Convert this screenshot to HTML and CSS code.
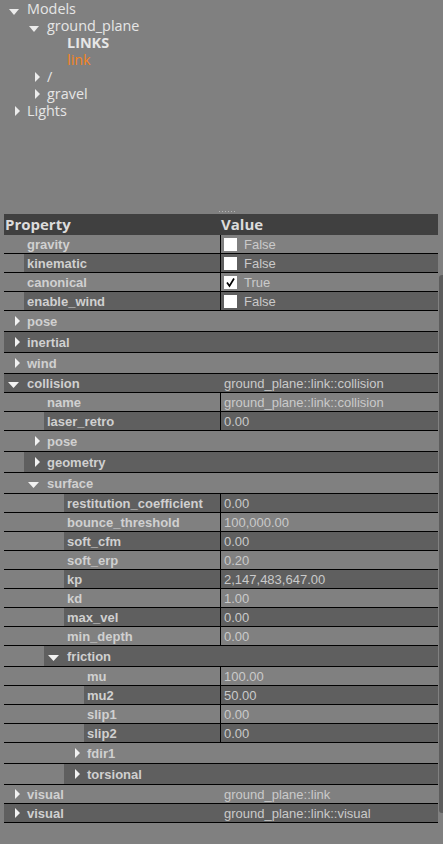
FILE: index.html
```html
<!DOCTYPE html>
<html>
<head>
<meta charset="utf-8">
<link rel="stylesheet" href="styles.css">
</head>
<body>
<div class="tree">
  <div class="trow"><span class="br dn"><svg width="10" height="6" viewBox="0 0 10 6"><path d="M0 0H10L5 6Z"/></svg></span><span class="txt">Models</span></div>
  <div class="trow"><span class="w1"></span><span class="br dn"><svg width="10" height="6" viewBox="0 0 10 6"><path d="M0 0H10L5 6Z"/></svg></span><span class="txt">ground_plane</span></div>
  <div class="trow"><span class="w2"></span><span class="br"></span><span class="txt bold">LINKS</span></div>
  <div class="trow"><span class="w2"></span><span class="br"></span><span class="txt orange">link</span></div>
  <div class="trow"><span class="w1"></span><span class="br r"><svg width="5" height="10" viewBox="0 0 5 10"><path d="M0 0L5 5L0 10Z"/></svg></span><span class="txt">/</span></div>
  <div class="trow"><span class="w1"></span><span class="br r"><svg width="5" height="10" viewBox="0 0 5 10"><path d="M0 0L5 5L0 10Z"/></svg></span><span class="txt">gravel</span></div>
  <div class="trow"><span class="br r"><svg width="5" height="10" viewBox="0 0 5 10"><path d="M0 0L5 5L0 10Z"/></svg></span><span class="txt">Lights</span></div>
</div>
<div class="splitter"><div class="dots"></div></div>
<div class="table">
  <div class="thead"><span>Property</span><span>Value</span></div>

  <div class="row l"><div class="name"><span class="w1"></span><div class="lab">gravity</div></div><div class="val"><span class="cb"></span>False</div></div>
  <div class="row d"><div class="name"><span class="w1"></span><div class="lab">kinematic</div></div><div class="val"><span class="cb"></span>False</div></div>
  <div class="row l"><div class="name"><span class="w1"></span><div class="lab">canonical</div></div><div class="val"><span class="cb"><svg width="11" height="11" viewBox="0 0 11 11"><path d="M2 5.5L4.5 9L9 1.5" fill="none" stroke="#000" stroke-width="1.7"/></svg></span>True</div></div>
  <div class="row d"><div class="name"><span class="w1"></span><div class="lab">enable_wind</div></div><div class="val"><span class="cb"></span>False</div></div>

  <div class="row l grp"><div class="name"><div class="lab"><span class="br r"><svg width="5" height="10" viewBox="0 0 5 10"><path d="M0 0L5 5L0 10Z"/></svg></span><span class="gt">pose</span></div></div></div>
  <div class="row d grp"><div class="name"><div class="lab"><span class="br r"><svg width="5" height="10" viewBox="0 0 5 10"><path d="M0 0L5 5L0 10Z"/></svg></span><span class="gt">inertial</span></div></div></div>
  <div class="row l grp"><div class="name"><div class="lab"><span class="br r"><svg width="5" height="10" viewBox="0 0 5 10"><path d="M0 0L5 5L0 10Z"/></svg></span><span class="gt">wind</span></div></div></div>
  <div class="row d gv"><div class="name"><div class="lab"><span class="br dn"><svg width="11" height="6" viewBox="0 0 11 6"><path d="M0 0H11L5.5 6Z"/></svg></span><span class="gt">collision</span></div></div><div class="val nb">ground_plane::link::collision</div></div>

  <div class="row l"><div class="name"><span class="w2"></span><div class="lab">name</div></div><div class="val">ground_plane::link::collision</div></div>
  <div class="row d"><div class="name"><span class="w2"></span><div class="lab">laser_retro</div></div><div class="val">0.00</div></div>
  <div class="row l grp"><div class="name"><span class="w1"></span><div class="lab"><span class="br r"><svg width="5" height="10" viewBox="0 0 5 10"><path d="M0 0L5 5L0 10Z"/></svg></span><span class="gt">pose</span></div></div></div>
  <div class="row d grp"><div class="name"><span class="w1"></span><div class="lab"><span class="br r"><svg width="5" height="10" viewBox="0 0 5 10"><path d="M0 0L5 5L0 10Z"/></svg></span><span class="gt">geometry</span></div></div></div>
  <div class="row l grp"><div class="name"><span class="w1"></span><div class="lab"><span class="br dn"><svg width="11" height="6" viewBox="0 0 11 6"><path d="M0 0H11L5.5 6Z"/></svg></span><span class="gt">surface</span></div></div></div>

  <div class="row d"><div class="name"><span class="w3"></span><div class="lab">restitution_coefficient</div></div><div class="val">0.00</div></div>
  <div class="row l"><div class="name"><span class="w3"></span><div class="lab">bounce_threshold</div></div><div class="val">100,000.00</div></div>
  <div class="row d"><div class="name"><span class="w3"></span><div class="lab">soft_cfm</div></div><div class="val">0.00</div></div>
  <div class="row l"><div class="name"><span class="w3"></span><div class="lab">soft_erp</div></div><div class="val">0.20</div></div>
  <div class="row d"><div class="name"><span class="w3"></span><div class="lab">kp</div></div><div class="val">2,147,483,647.00</div></div>
  <div class="row l"><div class="name"><span class="w3"></span><div class="lab">kd</div></div><div class="val">1.00</div></div>
  <div class="row d"><div class="name"><span class="w3"></span><div class="lab">max_vel</div></div><div class="val">0.00</div></div>
  <div class="row l"><div class="name"><span class="w3"></span><div class="lab">min_depth</div></div><div class="val">0.00</div></div>

  <div class="row d grp"><div class="name"><span class="w2"></span><div class="lab"><span class="br dn"><svg width="11" height="6" viewBox="0 0 11 6"><path d="M0 0H11L5.5 6Z"/></svg></span><span class="gt">friction</span></div></div></div>
  <div class="row l"><div class="name"><span class="w4"></span><div class="lab">mu</div></div><div class="val">100.00</div></div>
  <div class="row d"><div class="name"><span class="w4"></span><div class="lab">mu2</div></div><div class="val">50.00</div></div>
  <div class="row l"><div class="name"><span class="w4"></span><div class="lab">slip1</div></div><div class="val">0.00</div></div>
  <div class="row d"><div class="name"><span class="w4"></span><div class="lab">slip2</div></div><div class="val">0.00</div></div>
  <div class="row l grp"><div class="name"><span class="w3"></span><div class="lab"><span class="br r"><svg width="5" height="10" viewBox="0 0 5 10"><path d="M0 0L5 5L0 10Z"/></svg></span><span class="gt">fdir1</span></div></div></div>
  <div class="row d grp"><div class="name"><span class="w3"></span><div class="lab"><span class="br r"><svg width="5" height="10" viewBox="0 0 5 10"><path d="M0 0L5 5L0 10Z"/></svg></span><span class="gt">torsional</span></div></div></div>

  <div class="row l gv"><div class="name"><div class="lab"><span class="br r"><svg width="5" height="10" viewBox="0 0 5 10"><path d="M0 0L5 5L0 10Z"/></svg></span><span class="gt">visual</span></div></div><div class="val nb">ground_plane::link</div></div>
  <div class="row d gv"><div class="name"><div class="lab"><span class="br r"><svg width="5" height="10" viewBox="0 0 5 10"><path d="M0 0L5 5L0 10Z"/></svg></span><span class="gt">visual</span></div></div><div class="val nb">ground_plane::link::visual</div></div>
</div>
<div class="sb"></div>
</body>
</html>
```
FILE: styles.css
```css
* { box-sizing: border-box; margin: 0; padding: 0; }
html, body { background: #808080; }
body {
  width: 443px;
  height: 844px;
  overflow: hidden;
  position: relative;
  font-family: "Liberation Sans", Arial, sans-serif;
}

.w1 { width: 20px; flex: none; }
.w2 { width: 40px; flex: none; }
.w3 { width: 60px; flex: none; }
.w4 { width: 80px; flex: none; }

/* top tree */
.tree { height: 209px; }
.trow {
  display: flex;
  align-items: center;
  height: 17px;
  padding-left: 4px;
  font-family: "Open Sans", sans-serif;
  font-size: 14.4px;
  color: #e6e6e6;
  white-space: nowrap;
}
.trow .txt {
  display: block;
  padding-left: 3px;
  height: 17px;
  line-height: 17px;
  overflow: visible;
}
.trow .br svg { fill: #ececec; }
.trow .br.dn { padding-left: 5px; }
.trow .br.dn svg { margin-top: 6px; }
.bold { font-weight: 700; }
.orange { color: #f5841f; }

.br {
  width: 20px;
  flex: none;
  display: flex;
  align-items: center;
  height: 100%;
}
.br.r { padding-left: 11px; }
.br.dn { padding-left: 4px; }
.br svg { fill: #f2f2f2; display: block; }
.br.dn svg { margin-top: 4px; }

/* splitter */
.splitter { height: 5px; padding-top: 2px; }
.dots {
  margin-left: 219px;
  width: 18px;
  height: 1px;
  background: repeating-linear-gradient(to right, #b4b4b4 0 1px, transparent 1px 3px);
}

/* property table */
.table { margin-left: 4px; width: 434px; }
.thead {
  display: grid;
  grid-template-columns: 216px 1fr;
  height: 21px;
  background: #404040;
  color: #dcdcdc;
  font-family: "Open Sans", sans-serif;
  font-weight: 700;
  font-size: 15px;
  line-height: 21px;
}
.thead span { padding-left: 1px; }

.row {
  display: grid;
  grid-template-columns: 216px 1fr;
  height: 19px;
  border-bottom: 1px solid #000;
  font-size: 13px;
  color: #d0d0d0;
}
.row.grp { height: 21px; }
.row.grp .name { grid-column: 1 / -1; }
.name { display: flex; min-width: 0; }
.lab {
  flex: 1;
  display: flex;
  align-items: center;
  padding-left: 3px;
  font-weight: 700;
  white-space: nowrap;
  overflow: hidden;
}
.grp .lab, .gv .lab { padding-left: 0; }
.gt { padding-left: 3px; }
.row.d .lab, .row.d .val { background: #5f5f5f; }

.val {
  display: flex;
  align-items: center;
  padding-left: 3px;
  border-left: 1px solid #000;
  color: #cacaca;
  white-space: nowrap;
  overflow: hidden;
}
.val.nb { border-left: none; padding-left: 4px; }

.cb {
  width: 13px;
  height: 13px;
  flex: none;
  background: #fff;
  margin-right: 7px;
  display: flex;
  align-items: center;
  justify-content: center;
}
.cb svg { display: block; }

.sb {
  position: absolute;
  left: 439px;
  top: 275px;
  width: 8px;
  height: 538px;
  background: #5c5c5c;
  border-radius: 3px;
}
```
